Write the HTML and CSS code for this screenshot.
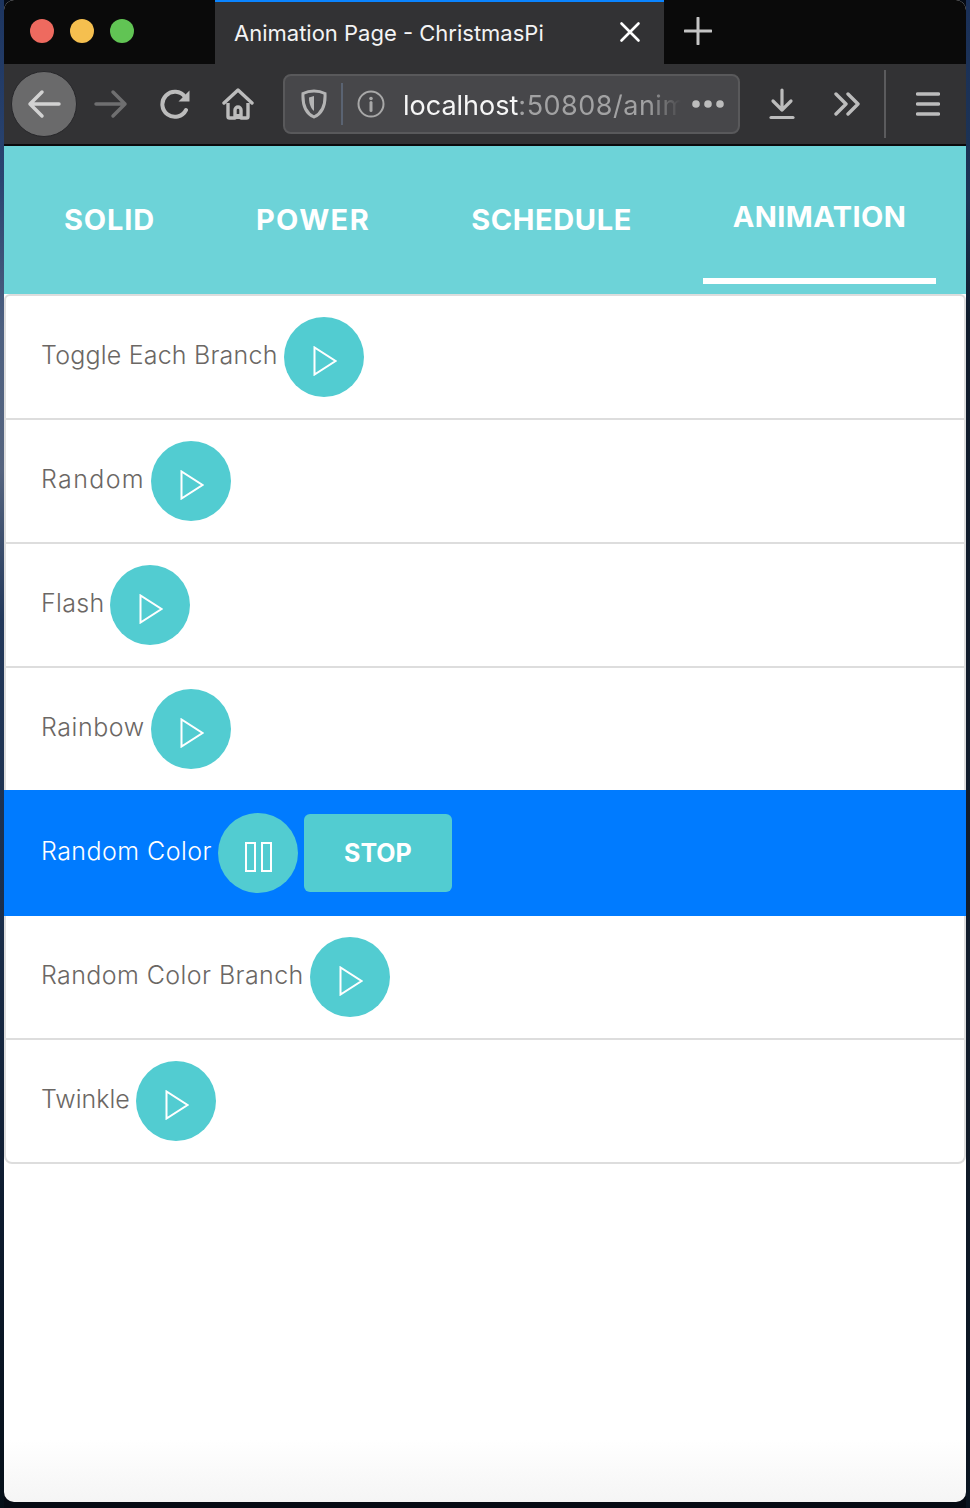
FILE: index.html
```html
<!DOCTYPE html>
<html lang="en">
<head>
	<meta charset="UTF-8">
	<title>Animation Page - ChristmasPi</title>
	<link rel="stylesheet" href="styles.css">
</head>
<body>
<div class="window">
	<div class="tabbar">
		<div class="lights">
			<span class="light red"></span>
			<span class="light yellow"></span>
			<span class="light green"></span>
		</div>
		<div class="tab">
			<span class="tab-title">Animation Page - ChristmasPi</span>
			<svg class="tab-close" width="24" height="24" viewBox="0 0 24 24"><path d="M3.500 3.500L20.500 20.500M20.500 3.500L3.500 20.500" stroke="#fff" stroke-width="2.600" stroke-linecap="round"/></svg>
		</div>
		<svg class="new-tab" width="28" height="28" viewBox="0 0 28 28"><path d="M14 1V27M1 14H27" stroke="#c4c4c4" stroke-width="3" stroke-linecap="round"/></svg>
	</div>
	<div class="toolbar">
		<div class="back">
			<svg width="34" height="30" viewBox="0 0 34 30"><path d="M32 15H3M15 3L3 15L15 27" fill="none" stroke="#d2d2d2" stroke-width="3.500" stroke-linecap="round" stroke-linejoin="round"/></svg>
		</div>
		<svg class="forward" width="34" height="30" viewBox="0 0 34 30"><path d="M2 15H31M19 3L31 15L19 27" fill="none" stroke="#6f6f70" stroke-width="3.500" stroke-linecap="round" stroke-linejoin="round"/></svg>
		<svg class="reload" width="32" height="30" viewBox="0 0 32 30"><path d="M26 21A12.500 12.500 0 1 1 25 8" fill="none" stroke="#bcbcbc" stroke-width="4" stroke-linecap="round"/><path d="M29.500 1.500V12.500H18.500Z" fill="#bcbcbc"/></svg>
		<svg class="home" width="32" height="32" viewBox="0 0 32 32"><path d="M2 15L16 2L30 15" fill="none" stroke="#bcbcbc" stroke-width="3.400" stroke-linecap="round" stroke-linejoin="round"/><path d="M6 15V28.500A1.500 1.500 0 0 0 7.500 30H13V22A3 3 0 0 1 19 22V30H24.500A1.500 1.500 0 0 0 26 28.500V15" fill="none" stroke="#bcbcbc" stroke-width="3.400" stroke-linejoin="round"/><path d="M13 26H19V31H13Z" fill="#bcbcbc"/></svg>
		<div class="urlbar">
			<svg class="shield" width="26" height="30" viewBox="0 0 26 30"><path d="M13 2C17 2 21 3 24 4.500C24.500 14 22 24 13 28C4 24 1.500 14 2 4.500C5 3 9 2 13 2Z" fill="none" stroke="#b4b4b4" stroke-width="3"/><path d="M13 7V22C9 19 8 13 8 8.500Z" fill="#b4b4b4"/></svg>
			<span class="url-sep"></span>
			<svg class="info" width="28" height="28" viewBox="0 0 28 28"><circle cx="14" cy="14" r="12.500" fill="none" stroke="#a8a8a8" stroke-width="2"/><circle cx="14" cy="8.500" r="1.800" fill="#a8a8a8"/><path d="M14 12.500V20.500" stroke="#a8a8a8" stroke-width="3" stroke-linecap="round"/></svg>
			<span class="url">localhost<span class="url-rest">:50808/anim</span></span>
			<svg class="dots" width="34" height="10" viewBox="0 0 34 10"><circle cx="5" cy="5" r="3.800" fill="#bcbcbc"/><circle cx="17" cy="5" r="3.800" fill="#bcbcbc"/><circle cx="29" cy="5" r="3.800" fill="#bcbcbc"/></svg>
		</div>
		<svg class="download" width="26" height="32" viewBox="0 0 26 32"><path d="M13 2V22M4 13L13 22L22 13" fill="none" stroke="#bcbcbc" stroke-width="3.200" stroke-linecap="round" stroke-linejoin="round"/><path d="M2 29.500H24" stroke="#bcbcbc" stroke-width="3.200" stroke-linecap="round"/></svg>
		<svg class="more" width="28" height="24" viewBox="0 0 28 24"><path d="M3 2L13 12L3 22M15 2L25 12L15 22" fill="none" stroke="#bcbcbc" stroke-width="3.400" stroke-linecap="round" stroke-linejoin="round"/></svg>
		<span class="tool-sep"></span>
		<svg class="menu" width="24" height="24" viewBox="0 0 24 24"><path d="M1.500 2H22.500M1.500 12H22.500M1.500 22H22.500" stroke="#bcbcbc" stroke-width="3.400" stroke-linecap="round"/></svg>
	</div>

	<div class="page">
		<ul class="nav">
			<li><a href="#">SOLID</a></li>
			<li><a href="#">POWER</a></li>
			<li><a href="#">SCHEDULE</a></li>
			<li><a href="#" class="active">ANIMATION</a></li>
		</ul>
		<ul class="list">
			<li class="item">
				<span class="name">Toggle Each Branch</span>
				<button class="play"><svg width="24" height="30" viewBox="0 0 24 30"><path d="M1.500 1.500V28.500L22.500 15Z" fill="none" stroke="#fff" stroke-width="2"/></svg></button>
			</li>
			<li class="item">
				<span class="name">Random</span>
				<button class="play"><svg width="24" height="30" viewBox="0 0 24 30"><path d="M1.500 1.500V28.500L22.500 15Z" fill="none" stroke="#fff" stroke-width="2"/></svg></button>
			</li>
			<li class="item">
				<span class="name">Flash</span>
				<button class="play"><svg width="24" height="30" viewBox="0 0 24 30"><path d="M1.500 1.500V28.500L22.500 15Z" fill="none" stroke="#fff" stroke-width="2"/></svg></button>
			</li>
			<li class="item">
				<span class="name">Rainbow</span>
				<button class="play"><svg width="24" height="30" viewBox="0 0 24 30"><path d="M1.500 1.500V28.500L22.500 15Z" fill="none" stroke="#fff" stroke-width="2"/></svg></button>
			</li>
			<li class="item current">
				<span class="name">Random Color</span>
				<button class="play"><svg width="27" height="30" viewBox="0 0 27 30"><path d="M1 1H10V29H1ZM17 1H26V29H17Z" fill="none" stroke="#fff" stroke-width="2"/></svg></button>
				<button class="stop">STOP</button>
			</li>
			<li class="item">
				<span class="name">Random Color Branch</span>
				<button class="play"><svg width="24" height="30" viewBox="0 0 24 30"><path d="M1.500 1.500V28.500L22.500 15Z" fill="none" stroke="#fff" stroke-width="2"/></svg></button>
			</li>
			<li class="item">
				<span class="name">Twinkle</span>
				<button class="play"><svg width="24" height="30" viewBox="0 0 24 30"><path d="M1.500 1.500V28.500L22.500 15Z" fill="none" stroke="#fff" stroke-width="2"/></svg></button>
			</li>
		</ul>
	</div>
</div>
</body>
</html>
```
FILE: styles.css
```css
html,body{
	margin:0;
	padding:0;
	height:100%;
}
body{
	background:
		linear-gradient(#1d3560,#2a4470 180px,#4d6080 330px,#55647f 470px,#22385a 620px,#1b2f4c 900px,#0e1c30 1200px,#061019) left/4px 100% no-repeat,
		linear-gradient(#1a3058,#1c3354 200px,#101c2c 320px,#121d2c 1000px,#0a1420) right/4px 100% no-repeat,
		#060b14;
	font-family:"Inter","Liberation Sans",sans-serif;
	overflow:hidden;
}
ul{
	margin:0;
	padding:0;
	list-style:none;
}
.window{
	margin:0 4px;
	height:1502px;
	border-radius:10px;
	overflow:hidden;
	background:linear-gradient(#fff 1440px,#f5f5f5);
}

/* browser chrome */
.tabbar{
	display:flex;
	align-items:center;
	height:64px;
	background:#0a0a0a;
}
.lights{
	display:flex;
	gap:16px;
	width:211px;
	padding:0 0 2px 26px;
	box-sizing:border-box;
}
.light{
	width:24px;
	height:24px;
	border-radius:50%;
}
.red{background:#ee6a5f;}
.yellow{background:#f5bf4f;}
.green{background:#61c454;}
.tab{
	display:flex;
	align-items:center;
	justify-content:space-between;
	width:449px;
	height:64px;
	box-sizing:border-box;
	padding:0 22px 2px 19px;
	background:#323234;
	border-top:2px solid #0a84ff;
}
.tab-title{
	margin-top:2px;
	color:#f4f4f4;
	font-size:22px;
	white-space:nowrap;
}
.new-tab{
	margin:0 0 2px 20px;
}
.toolbar{
	display:flex;
	align-items:center;
	height:80px;
	padding-left:7px;
	background:#323234;
	border-bottom:2px solid #0a0a0c;
}
.back{
	display:flex;
	align-items:center;
	justify-content:center;
	flex-shrink:0;
	width:66px;
	height:66px;
	box-sizing:border-box;
	border-radius:50%;
	background:#6a6a6b;
	border:1px solid #27272a;
}
.forward{margin-left:17px;}
.reload{margin-left:32px;}
.home{margin-left:30px;}
.urlbar{
	display:flex;
	align-items:center;
	width:457px;
	height:60px;
	margin-left:29px;
	box-sizing:border-box;
	border:2px solid #59595b;
	border-radius:8px;
	background:#47474a;
}
.shield{margin-left:16px;}
.url-sep{
	width:2px;
	height:42px;
	margin-left:14px;
	background:#5a6372;
}
.info{margin-left:14px;}
.url{
	width:278px;
	margin-left:18px;
	padding-top:2px;
	color:#f6f6f6;
	font-size:27px;
	white-space:nowrap;
	-webkit-mask-image:linear-gradient(to right,#000 88%,transparent);
	mask-image:linear-gradient(to right,#000 88%,transparent);
}
.url-rest{
	color:#a2a2a3;
	letter-spacing:.5px;
}
.dots{margin-left:10px;}
.download{margin-left:29px;}
.more{margin-left:38px;}
.tool-sep{
	width:2px;
	height:68px;
	margin-left:23px;
	background:#5b5b5d;
}
.menu{margin-left:30px;}

/* page nav */
.nav{
	display:grid;
	grid-template-columns:151px 174px 221px 233px;
	column-gap:41px;
	height:148px;
	padding-left:30px;
	background:#6dd3d8;
}
.nav a{
	display:block;
	height:100%;
	box-sizing:border-box;
	padding-top:56px;
	color:#fff;
	font-size:29px;
	font-weight:700;
	letter-spacing:.6px;
	line-height:36px;
	text-align:center;
	text-decoration:none;
}
.nav li:nth-child(1) a{letter-spacing:.8px;}
.nav li:nth-child(2) a{letter-spacing:1.4px;}
.nav a.active{
	height:138px;
	padding-top:53px;
	border-bottom:6px solid #fff;
	letter-spacing:.4px;
}

/* animation list */
.item{
	display:flex;
	align-items:center;
	height:124px;
	box-sizing:border-box;
	padding:0 35px;
	gap:6px;
	background:#fff;
	border:2px solid #ddd;
	border-bottom-width:0;
	color:#6b6764;
	font-size:25px;
	font-weight:300;
}
.item:first-child{
	border-radius:6px 6px 0 0;
}
.item:last-child{
	height:126px;
	border-bottom-width:2px;
	border-radius:0 0 8px 8px;
}
.item.current{
	height:126px;
	margin-bottom:-2px;
	padding-bottom:2px;
	position:relative;
	background:#007bff;
	border-color:#007bff;
	color:#fff;
}
.name{
	padding-bottom:4px;
	white-space:nowrap;
}
.item:nth-child(1) .name{letter-spacing:.2px;}
.item:nth-child(2) .name{letter-spacing:1.37px;}
.item:nth-child(3) .name{letter-spacing:.3px;}
.item:nth-child(4) .name{letter-spacing:.55px;}
.item:nth-child(5) .name{letter-spacing:.45px;}
.item:nth-child(6) .name{letter-spacing:.41px;}
.play{
	display:flex;
	align-items:center;
	justify-content:center;
	width:80px;
	height:80px;
	padding:8px 0 0 2px;
	border:none;
	border-radius:50%;
	background:#52ccd1;
}
.stop{
	width:148px;
	height:78px;
	border:none;
	border-radius:6px;
	background:#52ccd1;
	color:#fff;
	font-family:inherit;
	font-size:25px;
	font-weight:700;
}
```
